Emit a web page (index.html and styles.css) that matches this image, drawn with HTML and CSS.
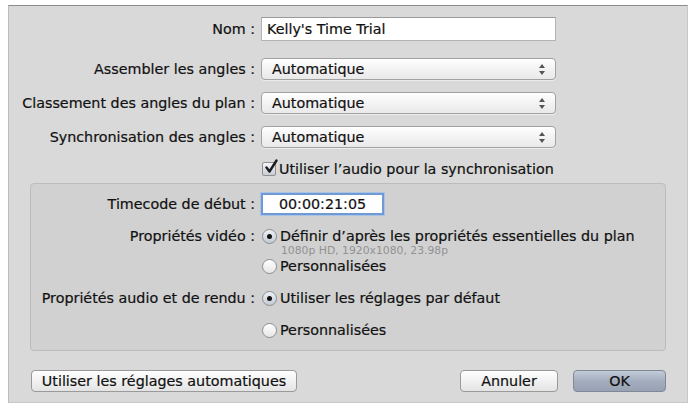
FILE: index.html
```html
<!DOCTYPE html>
<html lang="fr">
<head>
    <meta charset="UTF-8">
    <title>Nouveau plan multicam</title>
    <link rel="stylesheet" href="styles.css">
</head>
<body>

    <div class="dialog">

        <!-- Main settings -->
        <div class="row row-name">
            <span class="lbl">Nom :</span>
            <div class="text-field name">Kelly's Time Trial</div>
        </div>
        <div class="row row-popup">
            <span class="lbl">Assembler les angles :</span>
            <div class="popup">Automatique<span class="arrows"></span></div>
        </div>
        <div class="row row-popup">
            <span class="lbl">Classement des angles du plan :</span>
            <div class="popup">Automatique<span class="arrows"></span></div>
        </div>
        <div class="row row-popup">
            <span class="lbl">Synchronisation des angles :</span>
            <div class="popup">Automatique<span class="arrows"></span></div>
        </div>
        <div class="row row-check">
            <span class="lbl"></span>
            <span class="checkbox checked">
                <svg viewBox="0 0 16 16" width="16" height="16"><path d="M3.5 8.5 L6.5 12.5 L13.5 1.5" fill="none" stroke="#1c1c1c" stroke-width="2.4" stroke-linecap="round" stroke-linejoin="round"/></svg>
            </span>
            <span class="opt">Utiliser l’audio pour la synchronisation</span>
        </div>

        <!-- Advanced settings box -->
        <div class="group">
            <div class="row row-tc">
                <span class="lbl">Timecode de début :</span>
                <div class="text-field timecode">00:00:21:05</div>
            </div>
            <div class="row row-radio first">
                <span class="lbl">Propriétés vidéo :</span>
                <span class="radio on"></span>
                <span class="opt">Définir d’après les propriétés essentielles du plan</span>
            </div>
            <div class="row row-sub">
                <span class="lbl"></span>
                <span class="hint">1080p HD, 1920x1080, 23.98p</span>
            </div>
            <div class="row row-radio tight">
                <span class="lbl"></span>
                <span class="radio"></span>
                <span class="opt">Personnalisées</span>
            </div>
            <div class="row row-radio">
                <span class="lbl">Propriétés audio et de rendu :</span>
                <span class="radio on"></span>
                <span class="opt">Utiliser les réglages par défaut</span>
            </div>
            <div class="row row-radio">
                <span class="lbl"></span>
                <span class="radio"></span>
                <span class="opt">Personnalisées</span>
            </div>
        </div>

        <!-- Buttons -->
        <div class="actions">
            <button class="btn auto">Utiliser les réglages automatiques</button>
            <button class="btn cancel">Annuler</button>
            <button class="btn default">OK</button>
        </div>

    </div>

</body>
</html>
```

FILE: styles.css
```css
body {
    margin: 0;
    background: #fff;
    font-family: "DejaVu Sans", "Liberation Sans", sans-serif;
    font-size: 14.3px;
    color: #111;
    -webkit-text-stroke: 0.2px #111;
}
.dialog {
    margin: 5px 0 0 8px;
    width: 680px;
    height: 398px;
    box-sizing: border-box;
    padding-top: 11px;
    background: #d9d9d9;
    border-top: 1px solid #8c8c8c;
    border-left: 1px solid #bdbdbd;
    border-right: 1px solid #c8c8c8;
    border-bottom: 1px solid #c8c8c8;
}
.row {
    display: flex;
    align-items: center;
}
.lbl {
    width: 246px;
    margin-right: 6px;
    flex-shrink: 0;
    text-align: right;
    white-space: nowrap;
}
.row-name {
    height: 24px;
}
.row-popup {
    height: 22px;
    margin-top: 12px;
}
.row-name + .row-popup {
    margin-top: 17px;
}
.row-check {
    height: 17px;
    margin-top: 12px;
}
.text-field {
    box-sizing: border-box;
    height: 24px;
    line-height: 22px;
    background: #fff;
    border: 1px solid #b3b3b3;
    border-top-color: #9a9a9a;
    padding: 0 5px;
}
.name {
    width: 295px;
}
.popup {
    position: relative;
    box-sizing: border-box;
    width: 295px;
    height: 22px;
    line-height: 20px;
    padding: 0 10px;
    border: 1px solid #a2a2a2;
    border-radius: 4px;
    background: linear-gradient(#ffffff, #f3f3f3 50%, #e9e9e9);
    box-shadow: 0 1px 0 rgba(255, 255, 255, 0.5);
}
.arrows {
    position: absolute;
    right: 9px;
    top: 5px;
    width: 7px;
    height: 11px;
}
.arrows::before,
.arrows::after {
    content: "";
    position: absolute;
    left: 0;
    border-left: 3px solid transparent;
    border-right: 3px solid transparent;
}
.arrows::before {
    top: 0;
    border-bottom: 4px solid #555;
}
.arrows::after {
    bottom: 0;
    border-top: 4px solid #555;
}
.checkbox {
    position: relative;
    box-sizing: border-box;
    width: 14px;
    height: 14px;
    margin-left: 1px;
    margin-right: 3px;
    border: 1px solid #8f8f8f;
    border-radius: 2px;
    background: linear-gradient(#f4f6f9, #c9ced6);
}
.checkbox svg {
    position: absolute;
    left: 0;
    top: -4px;
}
.opt {
    white-space: nowrap;
}
.group {
    margin: 6px 21px 0 21px;
    height: 168px;
    box-sizing: border-box;
    padding-top: 9px;
    background: #d1d1d1;
    border: 1px solid #bcbcbc;
    border-radius: 4px;
}
.group .lbl {
    width: 224px;
}
.row-tc {
    height: 22px;
}
.timecode {
    width: 123px;
    height: 22px;
    line-height: 18px;
    text-align: center;
    border: 2px solid #6f9ad3;
    box-shadow: 0 0 0 1px #a9c3e6;
}
.row-radio {
    height: 16px;
    margin-top: 16px;
}
.row-radio.first {
    margin-top: 13px;
}
.row-radio.tight {
    margin-top: 1px;
}
.row-sub {
    height: 13px;
}
.hint {
    margin-left: 20px;
    font-size: 10.8px;
    color: #929292;
    -webkit-text-stroke: 0;
}
.radio {
    position: relative;
    box-sizing: border-box;
    width: 15px;
    height: 15px;
    margin-left: 1px;
    margin-right: 3px;
    border: 1px solid #8e8e8e;
    border-radius: 50%;
    background: linear-gradient(#ffffff, #e6e6e6);
}
.radio.on {
    background: linear-gradient(#eef1f6, #c3cad5);
}
.radio.on::after {
    content: "";
    position: absolute;
    left: 4px;
    top: 4px;
    width: 5px;
    height: 5px;
    border-radius: 50%;
    background: #111;
}
.actions {
    display: flex;
    margin: 19px 21px 0 22px;
}
.btn {
    box-sizing: border-box;
    height: 22px;
    padding: 0;
    font-family: inherit;
    font-size: 14.3px;
    color: #111;
    border: 1px solid #9a9a9a;
    border-radius: 4px;
    background: linear-gradient(#ffffff, #f1f1f1 50%, #e3e3e3);
}
.auto {
    width: 266px;
}
.cancel {
    width: 98px;
    margin-left: auto;
}
.default {
    width: 93px;
    margin-left: 15px;
    border-color: #7f8896;
    background: linear-gradient(#c3cbd7, #a3adbd 50%, #97a2b4);
}
```
